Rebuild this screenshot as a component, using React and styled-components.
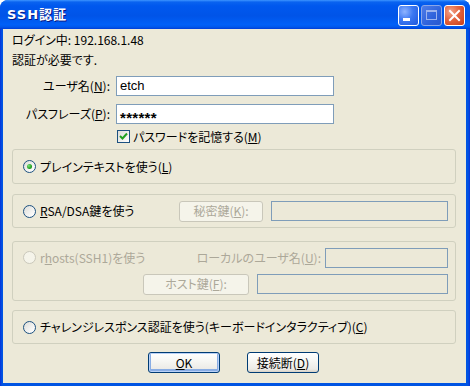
import React from 'react';
import styled, { createGlobalStyle } from 'styled-components';

const GlobalStyle = createGlobalStyle`
  html, body {
    margin: 0;
    padding: 0;
    background: #ffffff;
  }
  body {
    font-family: "Noto Sans CJK JP", "Liberation Sans", sans-serif;
    font-size: 12px;
    line-height: 14px;
    font-feature-settings: "palt";
    color: #000000;
  }
  #root {
    width: 470px;
    height: 386px;
  }
`;

const Window = styled.div`
  width: 470px;
  height: 386px;
  display: flex;
  flex-direction: column;
  border-radius: 8px 8px 0 0;
  overflow: hidden;
  background: #0054e3;
`;

const TitleBar = styled.div`
  height: 29px;
  flex: none;
  display: flex;
  align-items: center;
  justify-content: space-between;
  padding: 0 5px 0 7px;
  background: linear-gradient(180deg, #3d95ff 0%, #0a63f0 7%, #0058ee 20%, #0054e8 55%, #0060f8 85%, #0058ec 93%, #003dd7 100%);
`;

const TitleText = styled.span`
  font-family: "DejaVu Sans", "Noto Sans CJK JP", sans-serif;
  font-weight: bold;
  font-size: 13px;
  color: #ffffff;
  letter-spacing: 1px;
  text-shadow: 1px 1px 0 #0a1883;
  margin-top: 1px;
`;

const CaptionButtons = styled.div`
  display: flex;
  gap: 2px;
  margin-top: 2px;
`;

const CaptionButton = styled.div`
  width: 21px;
  height: 21px;
  box-sizing: border-box;
  border-radius: 3px;
  border: 1px solid ${p => (p.$dim ? '#8aa6e8' : '#ffffff')};
  display: flex;
  align-items: center;
  justify-content: center;
  background: ${p =>
    p.$close
      ? 'radial-gradient(circle at 30% 30%, #f3a58b 0%, #e3643f 45%, #c93d17 100%)'
      : p.$dim
      ? 'linear-gradient(135deg, #4f7de8 0%, #2f62db 60%, #2a58cf 100%)'
      : 'radial-gradient(circle at 30% 30%, #8fb4ff 0%, #3c78f2 45%, #1f57dc 100%)'};
`;

const Frame = styled.div`
  flex: 1;
  display: flex;
  padding: 0 4px 3px 3px;
  background: linear-gradient(90deg, #0831d9 0px, #0054e3 2px, #0054e3 calc(100% - 2px), #0831d9 100%);
`;

const Body = styled.div`
  flex: 1;
  display: flex;
  flex-direction: column;
  background: #ece9d8;
  padding: 0 10px 0 9px;
  box-sizing: border-box;
`;

const InfoLine = styled.div`
  height: 14px;
  margin-top: ${p => p.$top}px;
  white-space: nowrap;
`;

const FormGrid = styled.div`
  display: grid;
  grid-template-columns: 98px 218px;
  column-gap: 6px;
  row-gap: 8px;
  margin-top: 9px;
  align-items: center;
`;

const FieldLabel = styled.label`
  text-align: right;
  white-space: nowrap;
  color: ${p => (p.$disabled ? '#aca899' : '#000000')};
`;

const TextField = styled.div`
  height: 20px;
  box-sizing: border-box;
  border: 1px solid #7f9db9;
  background: ${p => (p.$disabled ? '#ece9d8' : '#ffffff')};
  width: ${p => (p.$w ? `${p.$w}px` : 'auto')};
  padding: 0 3px;
  display: flex;
  align-items: center;
  font-family: "Liberation Sans", sans-serif;
  font-size: 13px;
  flex: none;
`;

const Masked = styled.span`
  font-family: "Liberation Sans", sans-serif;
  font-weight: bold;
  font-size: 15px;
  letter-spacing: 0.3px;
  padding-top: 7px;
`;

const CheckRow = styled.div`
  display: flex;
  align-items: center;
  gap: 3px;
  height: 13px;
  margin: 6px 0 0 105px;
  white-space: nowrap;
`;

const CheckBox = styled.span`
  width: 13px;
  height: 13px;
  box-sizing: border-box;
  border: 1px solid #1c5180;
  background: linear-gradient(135deg, #dcdcd7 0%, #ffffff 100%);
  display: flex;
  align-items: center;
  justify-content: center;
  flex: none;
`;

const Group = styled.div`
  margin-top: ${p => p.$top}px;
  height: ${p => p.$h}px;
  flex: none;
  box-sizing: border-box;
  border: 1px solid #d0d0bf;
  border-radius: 3px;
  display: flex;
  flex-direction: column;
  justify-content: center;
  gap: 6px;
  padding: 0 7px 0 10px;
`;

const GroupRow = styled.div`
  display: flex;
  align-items: center;
  gap: 8px;
  justify-content: ${p => (p.$end ? 'flex-end' : 'flex-start')};
`;

const Option = styled.div`
  display: flex;
  align-items: center;
  gap: 4px;
  flex: 1;
  white-space: nowrap;
  color: ${p => (p.$disabled ? '#aca899' : '#000000')};
`;

const RadioCircle = styled.span`
  width: 13px;
  height: 13px;
  box-sizing: border-box;
  border-radius: 50%;
  border: 1px solid ${p => (p.$disabled ? '#cac8bb' : '#1c5180')};
  background: ${p =>
    p.$disabled ? '#f5f4ea' : 'linear-gradient(135deg, #dcdcd7 0%, #ffffff 90%)'};
  display: flex;
  align-items: center;
  justify-content: center;
  flex: none;
`;

const RadioDot = styled.span`
  width: 5px;
  height: 5px;
  border-radius: 50%;
  background: radial-gradient(circle at 35% 35%, #7be07a 0%, #21a121 60%, #1a8c1a 100%);
`;

const LocalPair = styled.div`
  display: flex;
  align-items: center;
  gap: 4px;
`;

const PushButton = styled.div`
  width: ${p => p.$w}px;
  height: 21px;
  box-sizing: border-box;
  border-radius: 3px;
  display: flex;
  align-items: center;
  justify-content: center;
  flex: none;
  white-space: nowrap;
  border: 1px solid ${p => (p.$disabled ? '#c9c7ba' : '#003c74')};
  color: ${p => (p.$disabled ? '#aca899' : '#000000')};
  background: ${p =>
    p.$disabled
      ? '#f5f4ea'
      : 'linear-gradient(180deg, #ffffff 0%, #f7f7f4 40%, #ecebe6 85%, #d6d0c5 100%)'};
  box-shadow: ${p => (p.$default ? 'inset 0 0 0 1px #b9d1f7, inset 0 -1px 0 2px #89ade4' : 'none')};
`;

const ButtonRow = styled.div`
  display: flex;
  justify-content: center;
  gap: 27px;
  margin-top: 8px;
  padding-right: 1px;
`;

const Mn = styled.u`
  text-decoration-skip-ink: none;
  text-underline-offset: 1px;
`;

function Radio({ checked, disabled }) {
  return (
    <RadioCircle $disabled={disabled}>{checked && <RadioDot />}</RadioCircle>
  );
}

export default function App() {
  return (
    <>
      <GlobalStyle />
      <Window>
        <TitleBar>
          <TitleText>SSH認証</TitleText>
          <CaptionButtons>
            <CaptionButton>
              <svg width="19" height="19" viewBox="0 0 19 19">
                <rect x="4" y="12" width="7" height="3" fill="#ffffff" />
              </svg>
            </CaptionButton>
            <CaptionButton $dim>
              <svg width="19" height="19" viewBox="0 0 19 19">
                <rect x="4.5" y="4.5" width="10" height="9" fill="none" stroke="#9db4ee" strokeWidth="1" />
                <rect x="4" y="4" width="11" height="2" fill="#9db4ee" />
              </svg>
            </CaptionButton>
            <CaptionButton $close>
              <svg width="19" height="19" viewBox="0 0 19 19">
                <path d="M5 5 L14 14 M14 5 L5 14" stroke="#ffffff" strokeWidth="2" strokeLinecap="square" />
              </svg>
            </CaptionButton>
          </CaptionButtons>
        </TitleBar>
        <Frame>
          <Body>
            <InfoLine $top={4}>ログイン中: 192.168.1.48</InfoLine>
            <InfoLine $top={6}>認証が必要です.</InfoLine>
            <FormGrid>
              <FieldLabel>ユーザ名(<Mn>N</Mn>):</FieldLabel>
              <TextField>etch</TextField>
              <FieldLabel>パスフレーズ(<Mn>P</Mn>):</FieldLabel>
              <TextField><Masked>******</Masked></TextField>
            </FormGrid>
            <CheckRow>
              <CheckBox>
                <svg width="9" height="9" viewBox="0 0 9 9">
                  <path d="M1 4 L3.5 6.5 L8 1.5" fill="none" stroke="#21a121" strokeWidth="2" />
                </svg>
              </CheckBox>
              <span>パスワードを記憶する(<Mn>M</Mn>)</span>
            </CheckRow>

            <Group $top={6} $h={35}>
              <GroupRow>
                <Option>
                  <Radio checked />
                  <span>プレインテキストを使う(<Mn>L</Mn>)</span>
                </Option>
              </GroupRow>
            </Group>

            <Group $top={10} $h={34}>
              <GroupRow>
                <Option>
                  <Radio />
                  <span><Mn>R</Mn>SA/DSA鍵を使う</span>
                </Option>
                <PushButton $w={84} $disabled>秘密鍵(<Mn>K</Mn>):</PushButton>
                <TextField $w={177} $disabled />
              </GroupRow>
            </Group>

            <Group $top={13} $h={60}>
              <GroupRow>
                <Option $disabled>
                  <Radio disabled />
                  <span>r<Mn>h</Mn>osts(SSH1)を使う</span>
                </Option>
                <LocalPair>
                  <FieldLabel $disabled>ローカルのユーザ名(<Mn>U</Mn>):</FieldLabel>
                  <TextField $w={123} $disabled />
                </LocalPair>
              </GroupRow>
              <GroupRow $end>
                <PushButton $w={106} $disabled>ホスト鍵(<Mn>F</Mn>):</PushButton>
                <TextField $w={191} $disabled />
              </GroupRow>
            </Group>

            <Group $top={9} $h={34}>
              <GroupRow>
                <Option>
                  <Radio />
                  <span>チャレンジレスポンス認証を使う(キーボードインタラクティブ)(<Mn>C</Mn>)</span>
                </Option>
              </GroupRow>
            </Group>

            <ButtonRow>
              <PushButton $w={72} $default><Mn>O</Mn>K</PushButton>
              <PushButton $w={72}>接続断(<Mn>D</Mn>)</PushButton>
            </ButtonRow>
          </Body>
        </Frame>
      </Window>
    </>
  );
}
